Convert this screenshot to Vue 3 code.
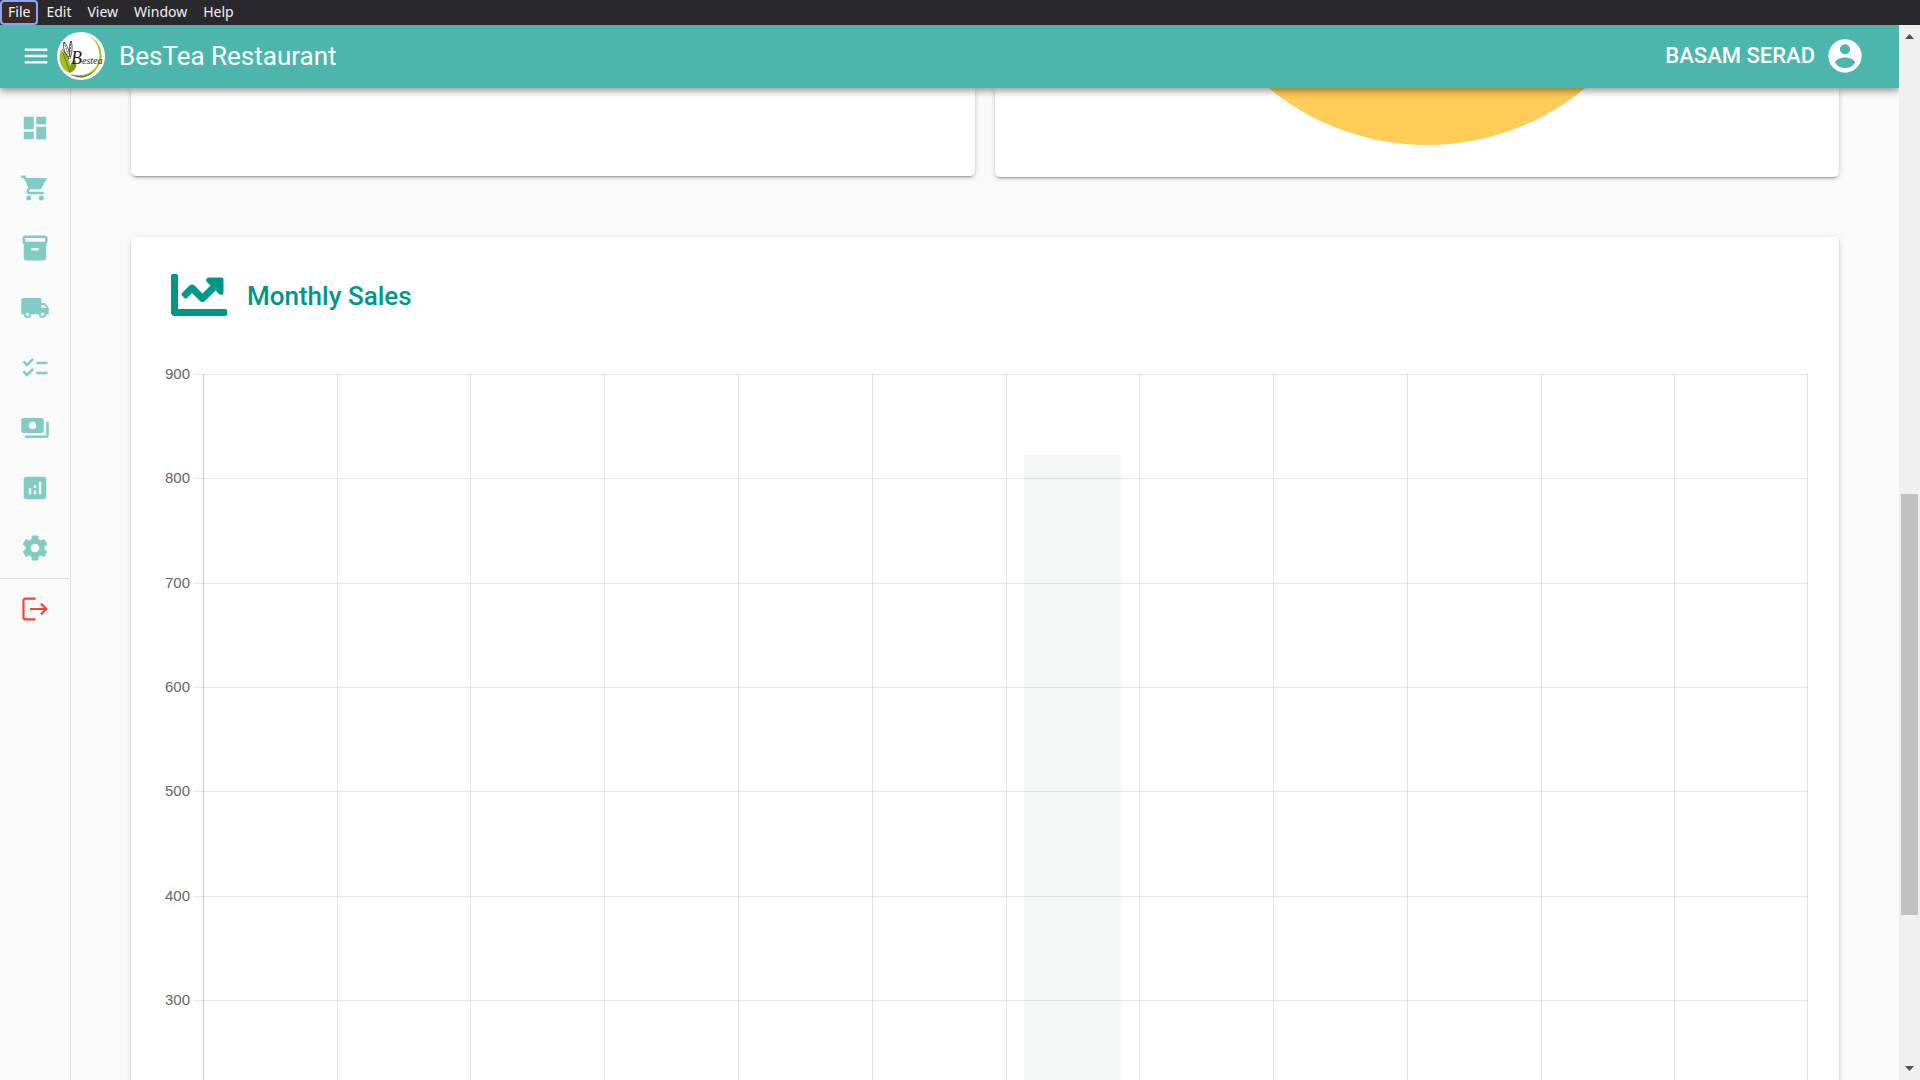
<script setup>
const menus = ['File', 'Edit', 'View', 'Window', 'Help']

const navItems = [
  { label: 'Dashboard', path: 'M13,3V9H21V3M13,21H21V11H13M3,21H11V15H3M3,13H11V3H3V13Z' },
  { label: 'Point of sale', path: 'M7 18c-1.1 0-1.99.9-1.99 2S5.9 22 7 22s2-.9 2-2-.9-2-2-2zM1 2v2h2l3.6 7.59-1.35 2.45c-.16.28-.25.61-.25.96 0 1.1.9 2 2 2h12v-2H7.42c-.14 0-.25-.11-.25-.25l.03-.12.9-1.63h7.45c.75 0 1.41-.41 1.75-1.03L21.7 4H5.21l-.94-2H1zm16 16c-1.1 0-1.99.9-1.99 2s.89 2 1.99 2 2-.9 2-2-.9-2-2-2z' },
  { label: 'Inventory', path: 'M20 2H4c-1 0-2 .9-2 2v3.01c0 .72.43 1.34 1 1.69V20c0 1.1 1.1 2 2 2h14c.9 0 2-.9 2-2V8.7c.57-.35 1-.97 1-1.69V4c0-1.1-1-2-2-2zm-5 12H9v-2h6v2zm5-7H4V4h16v3z' },
  { label: 'Deliveries', path: 'M20 8h-3V4H3c-1.1 0-2 .9-2 2v11h2c0 1.66 1.34 3 3 3s3-1.34 3-3h6c0 1.66 1.34 3 3 3s3-1.34 3-3h2v-5l-3-4zM6 18.5c-.83 0-1.5-.67-1.5-1.5s.67-1.5 1.5-1.5 1.5.67 1.5 1.5-.67 1.5-1.5 1.5zm13.5-9l1.96 2.5H17V9.5h2.5zm-1.5 9c-.83 0-1.5-.67-1.5-1.5s.67-1.5 1.5-1.5 1.5.67 1.5 1.5-.67 1.5-1.5 1.5z' },
  { label: 'Orders', path: 'M22 7h-9v2h9V7zm0 8h-9v2h9v-2zM5.54 11L2 7.46l1.41-1.41 2.12 2.12 4.24-4.24 1.41 1.41L5.54 11zm0 8L2 15.46l1.41-1.41 2.12 2.12 4.24-4.24 1.41 1.41L5.54 19z' },
  { label: 'Payments', path: 'M19 14V6c0-1.1-.9-2-2-2H3c-1.1 0-2 .9-2 2v8c0 1.1.9 2 2 2h14c1.1 0 2-.9 2-2zm-9-1c-1.66 0-3-1.34-3-3s1.34-3 3-3 3 1.34 3 3-1.34 3-3 3zm13-6v11c0 1.1-.9 2-2 2H4v-2h17V7h2z' },
  { label: 'Reports', path: 'M19 3H5c-1.1 0-2 .9-2 2v14c0 1.1.9 2 2 2h14c1.1 0 2-.9 2-2V5c0-1.1-.9-2-2-2zM9 17H7v-5h2v5zm4 0h-2v-3h2v3zm0-5h-2v-2h2v2zm4 5h-2V7h2v10z' },
  { label: 'Settings', path: 'M12,15.5A3.5,3.5 0 0,1 8.5,12A3.5,3.5 0 0,1 12,8.5A3.5,3.5 0 0,1 15.5,12A3.5,3.5 0 0,1 12,15.5M19.43,12.97C19.47,12.65 19.5,12.33 19.5,12C19.5,11.67 19.47,11.34 19.43,11L21.54,9.37C21.73,9.22 21.78,8.95 21.66,8.73L19.66,5.27C19.54,5.05 19.27,4.96 19.05,5.05L16.56,6.05C16.04,5.66 15.5,5.32 14.87,5.07L14.5,2.42C14.46,2.18 14.25,2 14,2H10C9.75,2 9.54,2.18 9.5,2.42L9.13,5.07C8.5,5.32 7.96,5.66 7.44,6.05L4.95,5.05C4.73,4.96 4.46,5.05 4.34,5.27L2.34,8.73C2.21,8.95 2.27,9.22 2.46,9.37L4.57,11C4.53,11.34 4.5,11.67 4.5,12C4.5,12.33 4.53,12.65 4.57,12.97L2.46,14.63C2.27,14.78 2.21,15.05 2.34,15.27L4.34,18.73C4.46,18.95 4.73,19.03 4.95,18.95L7.44,17.94C7.96,18.34 8.5,18.68 9.13,18.93L9.5,21.58C9.54,21.82 9.75,22 10,22H14C14.25,22 14.46,21.82 14.5,21.58L14.87,18.93C15.5,18.67 16.04,18.34 16.56,17.94L19.05,18.95C19.27,19.03 19.54,18.95 19.66,18.73L21.66,15.27C21.78,15.05 21.73,14.78 21.54,14.63L19.43,12.97Z' },
]

const MAX = 900
const labels = [900, 800, 700, 600, 500, 400, 300]
const sales = [0, 0, 0, 0, 0, 0, 822, 0, 0, 0, 0, 0]
const share = 0.72

const pct = (n) => `${n * 100}%`
const bars = sales.map((value, i) => ({
  x: pct((i + (1 - share) / 2) / sales.length),
  y: pct(1 - value / MAX),
  width: pct(share / sales.length),
  height: pct(value / MAX),
})).filter((bar, i) => sales[i] > 0)
</script>

<template>
  <div class="window">
    <nav class="menubar" aria-label="Application menu">
      <button v-for="(menu, i) in menus" :key="menu" type="button" class="menu" :class="{ focused: i === 0 }">{{ menu }}</button>
    </nav>

    <div class="frame">
      <div class="page">
        <header class="appbar">
          <button type="button" class="icon-button" aria-label="Toggle navigation">
            <svg class="icon" viewBox="0 0 24 24"><path d="M3,6H21V8H3V6M3,11H21V13H3V11M3,16H21V18H3V16Z" /></svg>
          </button>
          <svg class="logo" viewBox="0 0 48 48" aria-hidden="true">
            <circle cx="24" cy="24" r="24" fill="#fff" />
            <path d="M30 3.500C41 7 45.500 17 44.500 26C43 37 34 45 22 44.500C18 44.300 15 43 13 41.500C18 43.500 23 43.600 28 42.500C37 40 42.500 32 42.500 23C42 13 37 6 30 3.500Z" fill="#a4c52d" />
            <path d="M13 42C21 45.500 31 45 38 38C31 48 19 46.500 13 42Z" fill="#5d7f12" />
            <path d="M4 18C10 20 14 25 13 41C5 39 0 28 4 18Z" fill="#a3bf22" />
            <path d="M6 21C8 26 10 32 13 40" fill="none" stroke="#5f7a0e" />
            <path d="M18 28C21 33 19 38 13 41C12 35 13 31 18 28Z" fill="#7f9c14" />
            <path d="M12 27C9 23 5 16 7 10C10 13 12 18 13 25C12 18 12 13 14 9C16 14 15 21 13 27" fill="none" stroke="#333" stroke-width="0.800" />
            <path d="M7 10L11 22M5 17L12 25M14 9L13 20" fill="none" stroke="#333" stroke-width="0.800" stroke-dasharray="2 1" />
            <text x="14" y="32" class="logo-text"><tspan class="logo-initial">B</tspan>estea</text>
          </svg>
          <h1 class="brand">BesTea Restaurant</h1>
          <button type="button" class="account">
            BASAM SERAD
            <svg class="avatar" viewBox="0 0 24 24" aria-hidden="true"><path d="M12 2C6.480 2 2 6.480 2 12s4.480 10 10 10 10-4.480 10-10S17.520 2 12 2zm0 3c1.660 0 3 1.340 3 3s-1.340 3-3 3-3-1.340-3-3 1.340-3 3-3zm0 14.200c-2.500 0-4.710-1.280-6-3.220.03-1.990 4-3.080 6-3.080 1.990 0 5.970 1.090 6 3.080-1.290 1.940-3.500 3.220-6 3.220z" /></svg>
          </button>
        </header>

        <div class="body">
          <nav class="rail" aria-label="Main navigation">
            <a v-for="item in navItems" :key="item.label" href="#" class="rail-link" :aria-label="item.label">
              <svg class="icon" viewBox="0 0 24 24"><path :d="item.path" /></svg>
            </a>
            <a href="#" class="rail-link logout" aria-label="Log out">
              <svg class="icon line" viewBox="0 0 24 24"><path d="M12.500 3.700H4.500Q2.800 3.700 2.800 5.400V18.600Q2.800 20.300 4.500 20.300H12.500M8 12H21M16.800 7.700L21.100 12L16.800 16.300" /></svg>
            </a>
          </nav>

          <main class="content">
            <div class="summary">
              <section class="card tail"></section>
              <section class="card tail pie-card">
                <svg class="pie" viewBox="0 439 496 57" aria-hidden="true"><circle cx="248" cy="248" r="248" /></svg>
              </section>
            </div>

            <section class="card sales">
              <div class="sales-head">
                <svg class="sales-icon" viewBox="0 0 512 512" aria-hidden="true"><path d="M496 384H64V80c0-8.840-7.160-16-16-16H16C7.160 64 0 71.160 0 80v336c0 17.670 14.330 32 32 32h464c8.840 0 16-7.160 16-16v-32c0-8.840-7.160-16-16-16zM464 96H345.940c-21.380 0-32.090 25.850-16.970 40.970l32.400 32.400L288 242.750l-73.370-73.370c-12.500-12.500-32.760-12.500-45.250 0l-68.690 68.690c-6.250 6.250-6.250 16.380 0 22.630l22.620 22.620c6.250 6.250 16.380 6.250 22.630 0L192 237.250l73.370 73.370c12.500 12.500 32.760 12.500 45.250 0l96-96 32.400 32.400c15.120 15.120 40.970 4.410 40.970-16.970V112c.01-8.840-7.150-16-15.990-16z" /></svg>
                <h2 class="sales-title">Monthly Sales</h2>
              </div>
              <div class="chart">
                <div class="y-axis">
                  <span v-for="label in labels" :key="label">{{ label }}</span>
                </div>
                <svg class="plot" role="img" aria-label="Monthly sales bar chart">
                  <rect v-for="i in 10" :key="i" class="grid tick-line" x="-9" :y="pct((i - 1) / 9)" height="1" />
                  <rect v-for="i in 11" :key="i" class="grid" :x="pct(i / 12)" y="0" width="1" height="100%" />
                  <rect class="grid last-line" y="0" width="1" height="100%" />
                  <rect class="axis" x="0" y="0" width="1" height="100%" />
                  <rect v-for="bar in bars" :key="bar.x" class="bar" v-bind="bar" />
                </svg>
              </div>
            </section>
          </main>
        </div>
      </div>

      <div class="scrollbar" aria-hidden="true">
        <svg class="arrow" viewBox="0 0 21 21"><path d="M6 14L10.500 9L15 14Z" /></svg>
        <div class="track">
          <div class="before"></div>
          <div class="thumb"></div>
          <div class="after"></div>
        </div>
        <svg class="arrow" viewBox="0 0 21 21"><path d="M6 7L10.500 12L15 7Z" /></svg>
      </div>
    </div>
  </div>
</template>

<style>
body {
  margin: 0;
  overflow: hidden;
}
</style>

<style scoped>
* {
  box-sizing: border-box;
}

button {
  border: 0;
  background: none;
  color: inherit;
  font: inherit;
  cursor: pointer;
}

.window {
  display: flex;
  flex-direction: column;
  height: 100vh;
  overflow: hidden;
  background: #fafafa;
  font-family: Roboto, "Liberation Sans", sans-serif;
}

.menubar {
  display: flex;
  flex: none;
  height: 25px;
  background: #29292d;
  color: #f1f1f1;
  font: 14px/20px "Noto Sans", sans-serif;
}

.menu {
  padding: 0 8px 1px;
  border-radius: 4px;
}

.focused {
  background: #3a2a2c;
  box-shadow: inset 0 0 0 2px #84a9f0;
}

.frame {
  display: flex;
  flex: 1;
  min-height: 0;
}

.page {
  display: flex;
  flex: 1;
  flex-direction: column;
  min-width: 0;
}

.appbar {
  position: relative;
  z-index: 1;
  display: flex;
  flex: none;
  align-items: center;
  height: 63px;
  padding: 0 28px 2px 21px;
  background: #4db6ac;
  color: #fff;
  box-shadow: 0 3px 5px -1px rgba(0, 0, 0, 0.2), 0 5px 6px rgba(0, 0, 0, 0.14), 0 1px 12px rgba(0, 0, 0, 0.12);
  clip-path: inset(0 0 -12px 0);
}

.icon-button {
  display: flex;
  padding: 0;
}

.icon {
  display: block;
  width: 30px;
  height: 30px;
  fill: currentColor;
}

.line {
  fill: none;
  stroke: currentColor;
  stroke-width: 1.7;
}

.logo {
  width: 48px;
  height: 48px;
  margin: 0 14px 0 6px;
}

.logo-text {
  fill: #222;
  font: italic 10px "Liberation Serif", serif;
}

.logo-initial {
  font-size: 18px;
}

.brand {
  margin: 0;
  font-size: 26px;
  font-weight: 400;
  line-height: 32px;
}

.account {
  display: flex;
  align-items: center;
  gap: 10px;
  margin-left: auto;
  font-size: 22px;
  font-weight: 500;
}

.avatar {
  width: 40px;
  height: 40px;
  fill: currentColor;
}

.body {
  display: flex;
  flex: 1;
  min-height: 0;
  overflow: hidden;
}

.rail {
  flex: none;
  width: 71px;
  padding-top: 10px;
  border-right: 1px solid #e0e0e0;
}

.rail-link {
  display: flex;
  align-items: center;
  justify-content: center;
  height: 60px;
  color: #80cbc4;
}

.logout {
  border-top: 1px solid #e0e0e0;
  color: #f44336;
}

.content {
  flex: 1;
  min-width: 0;
  padding: 0 60px;
}

.card {
  border-radius: 5px;
  background: #fff;
  box-shadow: 0 4px 1px -3px rgba(0, 0, 0, 0.2), 0 2px 3px rgba(0, 0, 0, 0.14), 0 1px 6px rgba(0, 0, 0, 0.12);
}

.summary {
  display: grid;
  grid-template-columns: 1fr 1fr;
  align-items: start;
  gap: 20px;
  margin-bottom: 60px;
}

.tail {
  height: 88px;
  border-top-left-radius: 0;
  border-top-right-radius: 0;
}

.pie-card {
  display: flex;
  justify-content: center;
  height: 89px;
  padding-left: 20px;
}

.pie {
  width: 496px;
  height: 57px;
  fill: #ffcc56;
}

.sales {
  padding: 30px 31px 40px 34px;
}

.sales-head {
  display: flex;
  align-items: center;
  gap: 20px;
  margin-bottom: 42px;
  padding-left: 6px;
}

.sales-icon {
  width: 56px;
  height: 56px;
  fill: #009688;
}

.sales-title {
  margin: 0;
  padding-top: 2px;
  color: #009688;
  font-size: 26px;
  font-weight: 500;
  line-height: 32px;
}

.chart {
  display: flex;
  gap: 13px;
}

.y-axis {
  display: flex;
  flex-direction: column;
  justify-content: space-between;
  width: 25px;
  height: 644px;
  color: #666;
  font: 15px/18px "Liberation Sans", sans-serif;
  text-align: right;
}

.plot {
  flex: 1;
  min-width: 0;
  height: 939px;
  margin-top: 9px;
  overflow: visible;
  shape-rendering: crispEdges;
}

.grid {
  fill: rgba(0, 0, 0, 0.1);
}

.tick-line {
  width: calc(100% + 9px);
}

.last-line {
  x: calc(100% - 1px);
}

.axis {
  fill: rgba(0, 0, 0, 0.2);
}

.bar {
  fill: rgba(95, 125, 120, 0.07);
}

.scrollbar {
  display: flex;
  flex: none;
  flex-direction: column;
  width: 21px;
  background: #f0f0f0;
}

.arrow {
  flex: none;
  width: 21px;
  height: 21px;
  fill: #505050;
}

.track {
  display: flex;
  flex: 1;
  flex-direction: column;
  padding: 0 2px;
}

.before {
  flex: 448;
}

.thumb {
  flex: 421;
  background: #c1c1c1;
}

.after {
  flex: 144;
}
</style>
